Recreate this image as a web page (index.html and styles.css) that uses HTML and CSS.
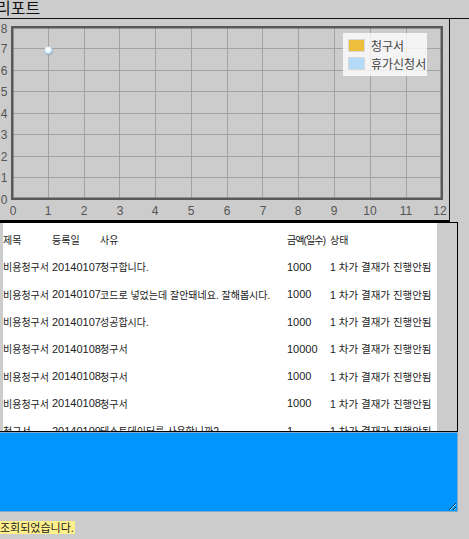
FILE: index.html
```html
<!DOCTYPE html>
<html lang="ko">
<head>
<meta charset="utf-8">
<title>리포트</title>
<link rel="stylesheet" href="styles.css">
</head>
<body>
<div class="app">
  <h1 class="title">리포트</h1>
  <div class="chart-panel">
    <svg class="chart" width="449" height="200" viewBox="0 0 449 200">
      <defs>
        <radialGradient id="dot" cx="45%" cy="40%" r="60%">
          <stop offset="0" stop-color="#ffffff"/>
          <stop offset="0.45" stop-color="#f4faff"/>
          <stop offset="0.8" stop-color="#b9dcf6"/>
          <stop offset="1" stop-color="#7faed3"/>
        </radialGradient>
      </defs>
      <g stroke="#a3a3a3" stroke-width="1">
        <line x1="48.5" y1="7" x2="48.5" y2="179"/>
        <line x1="84.5" y1="7" x2="84.5" y2="179"/>
        <line x1="119.5" y1="7" x2="119.5" y2="179"/>
        <line x1="155.5" y1="7" x2="155.5" y2="179"/>
        <line x1="191.5" y1="7" x2="191.5" y2="179"/>
        <line x1="227.5" y1="7" x2="227.5" y2="179"/>
        <line x1="262.5" y1="7" x2="262.5" y2="179"/>
        <line x1="298.5" y1="7" x2="298.5" y2="179"/>
        <line x1="334.5" y1="7" x2="334.5" y2="179"/>
        <line x1="370.5" y1="7" x2="370.5" y2="179"/>
        <line x1="406.5" y1="7" x2="406.5" y2="179"/>
        <line x1="12" y1="157.5" x2="442" y2="157.5"/>
        <line x1="12" y1="136.5" x2="442" y2="136.5"/>
        <line x1="12" y1="114.5" x2="442" y2="114.5"/>
        <line x1="12" y1="93.5" x2="442" y2="93.5"/>
        <line x1="12" y1="71.5" x2="442" y2="71.5"/>
        <line x1="12" y1="50.5" x2="442" y2="50.5"/>
        <line x1="12" y1="28.5" x2="442" y2="28.5"/>
      </g>
      <rect x="12.25" y="7.25" width="429.5" height="171.5" fill="none" stroke="#585858" stroke-width="2.5"/>
      <g class="axis" text-anchor="middle">
        <text x="4" y="184">0</text>
        <text x="4" y="162">1</text>
        <text x="4" y="141">2</text>
        <text x="4" y="119">3</text>
        <text x="4" y="98">4</text>
        <text x="4" y="76">5</text>
        <text x="4" y="55">6</text>
        <text x="4" y="33">7</text>
        <text x="4" y="12.5">8</text>
        <text x="13" y="195">0</text>
        <text x="48" y="195">1</text>
        <text x="84" y="195">2</text>
        <text x="120" y="195">3</text>
        <text x="155" y="195">4</text>
        <text x="191" y="195">5</text>
        <text x="227" y="195">6</text>
        <text x="263" y="195">7</text>
        <text x="298" y="195">8</text>
        <text x="334" y="195">9</text>
        <text x="370" y="195">10</text>
        <text x="406" y="195">11</text>
        <text x="440" y="195">12</text>
      </g>
      <circle cx="49" cy="31.5" r="4.3" fill="#9a9a9a" opacity="0.35"/>
      <circle cx="48.5" cy="30.5" r="4" fill="url(#dot)"/>
    </svg>
    <div class="legend">
      <div class="legend-item"><span class="swatch swatch-yellow"></span><span>청구서</span></div>
      <div class="legend-item"><span class="swatch swatch-blue"></span><span>휴가신청서</span></div>
    </div>
  </div>

  <div class="grid-box">
    <div class="grid-inner">
      <table class="grid">
        <colgroup>
          <col class="c1"><col class="c2"><col class="c3"><col class="c4"><col class="c5">
        </colgroup>
        <thead>
          <tr><th>제목</th><th>등록일</th><th>사유</th><th class="h-amt">금액(일수)</th><th>상태</th></tr>
        </thead>
        <tbody>
          <tr><td>비용청구서</td><td class="num">20140107</td><td>청구합니다.</td><td class="num">1000</td><td class="state">1 차가 결재가 진행안됨</td></tr>
          <tr><td>비용청구서</td><td class="num">20140107</td><td>코드로 넣었는데 잘안돼네요. 잘해봅시다.</td><td class="num">1000</td><td class="state">1 차가 결재가 진행안됨</td></tr>
          <tr><td>비용청구서</td><td class="num">20140107</td><td>성공합시다.</td><td class="num">1000</td><td class="state">1 차가 결재가 진행안됨</td></tr>
          <tr><td>비용청구서</td><td class="num">20140108</td><td>청구서</td><td class="num">10000</td><td class="state">1 차가 결재가 진행안됨</td></tr>
          <tr><td>비용청구서</td><td class="num">20140108</td><td>청구서</td><td class="num">1000</td><td class="state">1 차가 결재가 진행안됨</td></tr>
          <tr><td>비용청구서</td><td class="num">20140108</td><td>청구서</td><td class="num">1000</td><td class="state">1 차가 결재가 진행안됨</td></tr>
          <tr><td>청구서</td><td class="num">20140109</td><td>테스트데이터를 사용합니까?</td><td class="num">1</td><td class="state">1 차가 결재가 진행안됨</td></tr>
        </tbody>
      </table>
    </div>
  </div>

  <textarea class="memo"></textarea>
  <div class="status"><span class="status-msg">조회되었습니다.</span></div>
</div>
</body>
</html>
```
FILE: styles.css
```css
html, body {
  margin: 0;
  padding: 0;
  background: #cccccc;
  overflow: hidden;
}

body {
  font-family: "Liberation Sans", "Noto Sans CJK KR", sans-serif;
  color: #222;
}

.app {
  width: 469px;
}

.title {
  margin: 0 0 0 -4px;
  height: 19px;
  line-height: 17px;
  font-size: 16px;
  font-weight: normal;
  color: #111;
  border-bottom: 1px solid #111;
  box-sizing: border-box;
}

.chart-panel {
  position: relative;
  width: 450px;
  height: 203px;
  box-sizing: border-box;
  border-right: 1px solid #111;
  border-bottom: 2px solid #000;
  padding-top: 1px;
}

.chart {
  display: block;
}

.axis text {
  font-family: "Liberation Sans", sans-serif;
  font-size: 12px;
  fill: #555;
}

.legend {
  position: absolute;
  left: 343px;
  top: 14px;
  width: 84px;
  height: 43px;
  box-sizing: border-box;
  padding: 6px 0 0 5px;
  background: rgba(255, 255, 255, 0.78);
  display: flex;
  flex-direction: column;
  gap: 5px;
}

.legend-item {
  display: flex;
  align-items: center;
  gap: 6px;
  height: 13px;
  font-size: 12px;
  color: #444;
  white-space: nowrap;
}

.swatch {
  width: 17px;
  height: 13px;
  box-sizing: border-box;
  border: 1px solid #d8d8d8;
  flex: none;
}

.swatch-yellow {
  background: #eebf3c;
}

.swatch-blue {
  background: #b3dbf8;
}

.grid-box {
  width: 458px;
  height: 210px;
  box-sizing: border-box;
  border-top: 1px solid #000;
  border-right: 1px solid #000;
  border-bottom: 1px solid #000;
  padding-left: 3px;
  background: #cccccc;
}

.grid-inner {
  width: 434px;
  height: 208px;
  overflow: hidden;
  background: #ffffff;
  box-sizing: border-box;
  padding-top: 3px;
}

.grid {
  border-collapse: collapse;
  table-layout: fixed;
  width: 490px;
  font-size: 10px;
  color: #222;
  white-space: nowrap;
}

.c1 { width: 49px; }
.c2 { width: 48px; }
.c3 { width: 187px; }
.c4 { width: 43px; }
.c5 { width: 163px; }

.grid th,
.grid td {
  padding: 0;
  height: 27.3px;
  text-align: left;
  font-weight: normal;
  vertical-align: middle;
}

.grid .h-amt {
  letter-spacing: -0.9px;
}

.grid .num {
  font-size: 11px;
}

.grid .state {
  font-size: 10.5px;
}

.memo {
  display: block;
  margin: 0 0 0 -2px;
  width: 460px;
  height: 80px;
  box-sizing: border-box;
  background: #0095ff;
  border: 1px solid #7aaad2;
  padding: 0;
  resize: both;
  outline: none;
}

.status {
  margin-top: 6px;
  height: 16px;
}

.status-msg {
  display: inline-block;
  background: #fff08c;
  font-size: 11px;
  line-height: 15px;
  padding: 0 1px 0 0;
  color: #222;
}
```
